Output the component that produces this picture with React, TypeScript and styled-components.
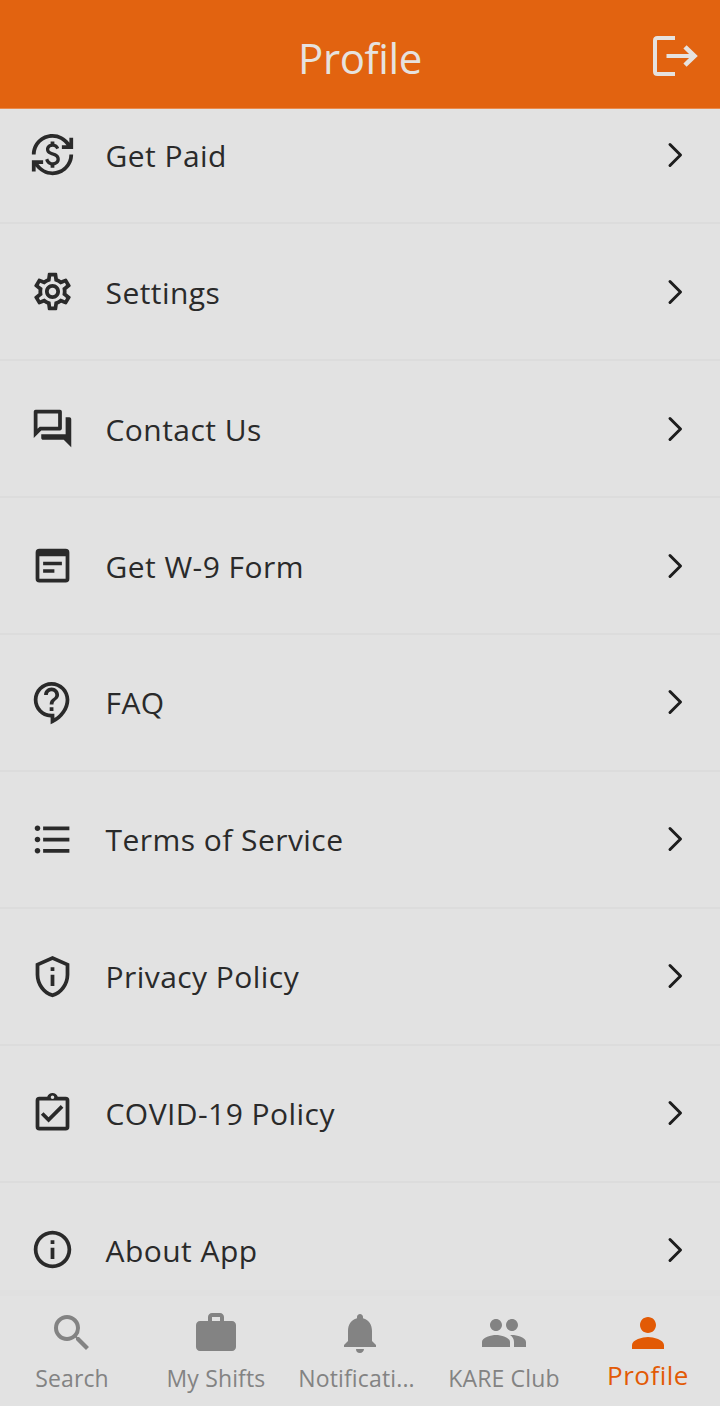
import React from "react";
import styled, { createGlobalStyle } from "styled-components";
import {
  MdCurrencyExchange,
  MdOutlineSettings,
  MdOutlineQuestionAnswer,
  MdOutlineContactSupport,
  MdFormatListBulleted,
  MdOutlinePrivacyTip,
  MdOutlineInfo,
  MdSearch,
  MdWork,
  MdNotifications,
  MdPeople,
  MdPerson,
} from "react-icons/md";

const Global = createGlobalStyle`
  * { box-sizing: border-box; }
  body { margin: 0; background: #e2e2e2; font-family: "Open Sans", sans-serif; }
`;

const Screen = styled.div`
  display: flex;
  flex-direction: column;
  width: 720px;
  height: 1406px;
  overflow: hidden;
  background: #e2e2e2;
  color: #2a2a2a;
`;

const Header = styled.header`
  display: grid;
  grid-template-columns: 1fr auto 1fr;
  align-items: center;
  flex: none;
  height: 109px;
  padding: 8px 22px 0 0;
  background: #e26310;
  border-bottom: 1px solid #e98a4c;
  color: #e6e2df;
`;

const Title = styled.h1`
  grid-column: 2;
  margin: 0 0 0 22px;
  font-size: 42px;
  line-height: 56px;
  font-weight: 400;
  letter-spacing: -0.4px;
`;

const LogoutButton = styled.button`
  justify-self: end;
  display: flex;
  margin: 0;
  padding: 0 0 4px;
  border: 0;
  background: none;
  color: inherit;
`;

const List = styled.ul`
  flex: 1;
  min-height: 0;
  margin: 0;
  padding: 0;
  overflow: hidden;
  list-style: none;
`;

const Row = styled.li<{ $first?: boolean }>`
  display: flex;
  align-items: center;
  height: 136.9px;
  margin-top: ${(p) => (p.$first ? "-21.6px" : "0")};
  padding: 0 28px 0 30px;
  border-bottom: 2px solid #dcdcdc;
  svg { flex: none; }
`;

const RowLabel = styled.span`
  flex: 1;
  margin-left: 30.5px;
  padding-top: 2px;
  font-size: 30px;
  line-height: 40px;
  letter-spacing: 0.45px;
`;

const TabBar = styled.nav`
  display: grid;
  grid-template-columns: repeat(5, 144px);
  flex: none;
  height: 116px;
  border-top: 6px solid #e0e0e0;
  background: #e2e2e2;
`;

const Tab = styled.div<{ $active?: boolean }>`
  display: flex;
  flex-direction: column;
  align-items: center;
  padding-top: 13px;
  color: ${(p) => (p.$active ? "#e25a05" : "#838383")};
`;

const TabLabel = styled.span<{ $active?: boolean; $truncated?: boolean }>`
  margin-top: ${(p) => (p.$active ? "1px" : "4px")};
  padding-right: ${(p) => (p.$truncated ? "7px" : "0")};
  font-size: ${(p) => (p.$active ? "26px" : "23px")};
  line-height: 34px;
  letter-spacing: ${(p) => (p.$active ? "0.5px" : "0.15px")};
  white-space: nowrap;
`;

const FormIcon = () => (
  <svg width="45" height="45" viewBox="0 0 24 24" fill="currentColor">
    <path
      fillRule="evenodd"
      d="M5 3h14a2 2 0 0 1 2 2v14a2 2 0 0 1-2 2H5a2 2 0 0 1-2-2V5a2 2 0 0 1 2-2zM5 7v12h14V7zM7 10h10v1.8H7zM7 14h6v1.8H7z"
    />
  </svg>
);

const ClipboardIcon = () => (
  <svg width="45" height="45" viewBox="0 0 24 24" fill="currentColor">
    <path
      fillRule="evenodd"
      d="M5 3h4.18C9.6 1.84 10.7 1 12 1s2.4.84 2.82 2H19a2 2 0 0 1 2 2v14a2 2 0 0 1-2 2H5a2 2 0 0 1-2-2V5a2 2 0 0 1 2-2zm0 2v14h14V5zM12 2.4a.95.95 0 1 0 0 1.9a.95.95 0 0 0 0-1.9z"
    />
    <path d="M5.8 12.7l1.4-1.4 2.7 2.7 6.5-6.5 1.4 1.4-7.9 7.9z" />
  </svg>
);

const LogoutIcon = () => (
  <svg width="45" height="40" viewBox="0 0 45 40" fill="none" stroke="currentColor" strokeWidth="4">
    <path d="M22 2H4.5Q2 2 2 4.5v31Q2 38 4.5 38H22" />
    <path d="M13.5 20H42" />
    <path d="M32 10.8L41.5 20L32 29.2" strokeWidth="4.6" />
  </svg>
);

const Chevron = () => (
  <svg width="34" height="34" viewBox="0 0 34 34" fill="none" stroke="#1d1d1d" strokeWidth="3" strokeLinecap="round" strokeLinejoin="round">
    <path d="M12 6.5L22.5 17L12 27.5" />
  </svg>
);

const rows = [
  { label: "Get Paid", icon: <MdCurrencyExchange size={45} /> },
  { label: "Settings", icon: <MdOutlineSettings size={45} /> },
  { label: "Contact Us", icon: <MdOutlineQuestionAnswer size={45} /> },
  { label: "Get W-9 Form", icon: <FormIcon /> },
  { label: "FAQ", icon: <MdOutlineContactSupport size={45} /> },
  { label: "Terms of Service", icon: <MdFormatListBulleted size={45} /> },
  { label: "Privacy Policy", icon: <MdOutlinePrivacyTip size={45} /> },
  { label: "COVID-19 Policy", icon: <ClipboardIcon /> },
  { label: "About App", icon: <MdOutlineInfo size={45} /> },
];

const tabs = [
  { label: "Search", Icon: MdSearch },
  { label: "My Shifts", Icon: MdWork },
  { label: "Notificati...", Icon: MdNotifications, truncated: true },
  { label: "KARE Club", Icon: MdPeople },
  { label: "Profile", Icon: MdPerson, active: true },
];

export default function App() {
  return (
    <Screen>
      <Global />
      <Header>
        <Title>Profile</Title>
        <LogoutButton aria-label="Log out">
          <LogoutIcon />
        </LogoutButton>
      </Header>
      <List>
        {rows.map((r, i) => (
          <Row key={r.label} $first={i === 0}>
            {r.icon}
            <RowLabel>{r.label}</RowLabel>
            <Chevron />
          </Row>
        ))}
      </List>
      <TabBar>
        {tabs.map(({ label, Icon, active, truncated }) => (
          <Tab key={label} $active={active}>
            <Icon size={48} />
            <TabLabel $active={active} $truncated={truncated}>
              {label}
            </TabLabel>
          </Tab>
        ))}
      </TabBar>
    </Screen>
  );
}
